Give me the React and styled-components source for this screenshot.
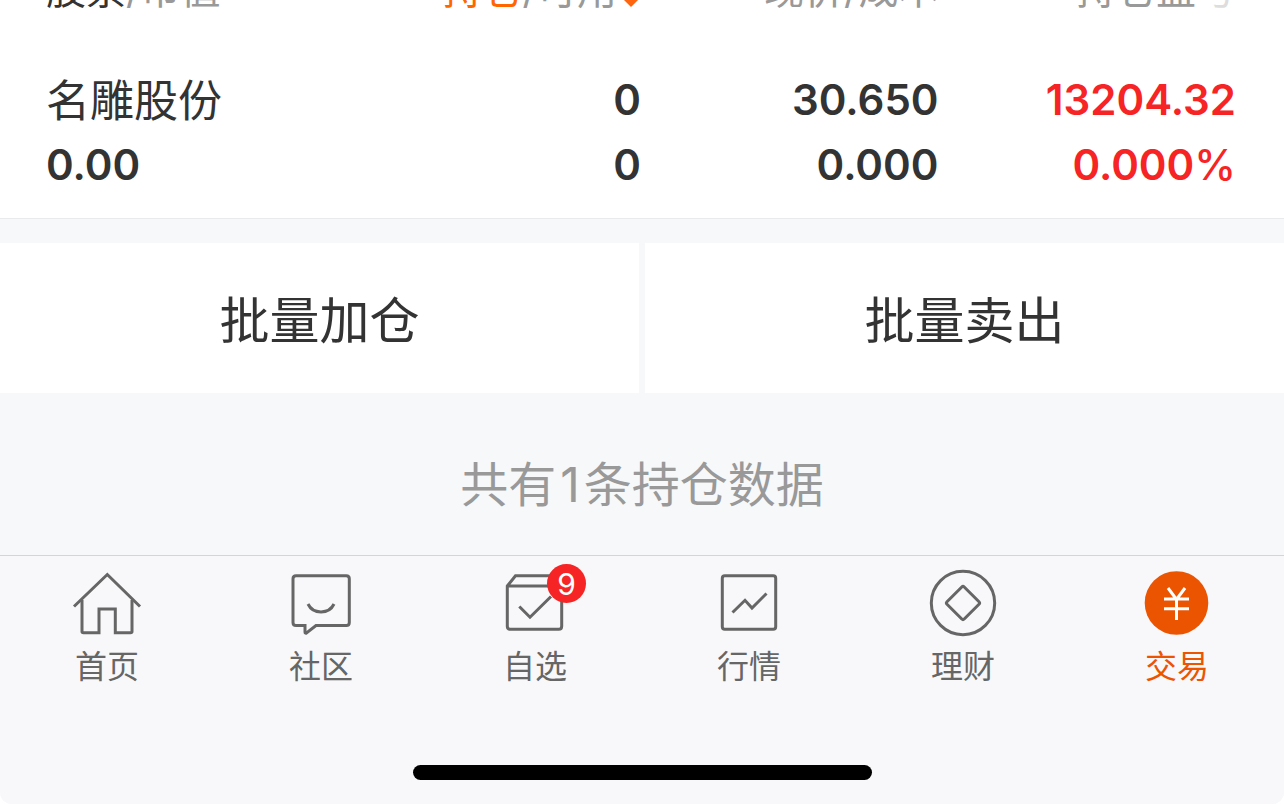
import React from 'react';
import styled, { createGlobalStyle } from 'styled-components';

const holdings = [
  {
    name: '名雕股份',
    value: '0.00',
    position: '0',
    available: '0',
    price: '30.650',
    cost: '0.000',
    profit: '13204.32',
    ratio: '0.000',
  },
];

const HomeIcon = () => (
  <Icon viewBox="0 0 70 70">
    <path d="M2 38.5 35.3 6.5 68 38.5" />
    <path d="M10 32V63.5Q10 64.7 11.5 64.7H27V41H43.3V64.7H58.5Q60 64.7 60 63.5V32" />
  </Icon>
);

const CommunityIcon = () => (
  <Icon viewBox="0 0 70 70">
    <path d="M10 7.7H60.3Q63.3 7.7 63.3 10.7V54.6Q63.3 57.6 60.3 57.6H30L20.5 65Q19 65.6 19 64V57.6H10Q7 57.6 7 54.6V10.7Q7 7.7 10 7.7Z" />
    <path d="M22 36C27 46.5 43 46.5 48 36" />
  </Icon>
);

const WatchlistIcon = () => (
  <Icon viewBox="0 0 70 70">
    <path d="M7.3 18 15.5 7.7H53.5L61.7 18V58.3Q61.7 61.3 58.7 61.3H10.3Q7.3 61.3 7.3 58.3ZH61.7" />
    <path d="M19.3 38.5 30 49.2 51 28.5" />
  </Icon>
);

const MarketIcon = () => (
  <Icon viewBox="0 0 70 70">
    <rect x="8.3" y="7.7" width="53.4" height="53.6" rx="2.5" />
    <path d="M18.5 44.5 31 32.3 38 40 52.5 25.5" />
  </Icon>
);

const WealthIcon = () => (
  <Icon viewBox="0 0 70 70">
    <circle cx="35" cy="35" r="31.7" />
    <path d="M33.8 19 19 33.8Q17.8 35 19 36.2L33.8 51Q35 52.2 36.2 51L51 36.2Q52.2 35 51 33.8L36.2 19Q35 17.8 33.8 19Z" />
  </Icon>
);

const TradeIcon = () => (
  <Icon viewBox="0 0 70 70">
    <circle cx="34.5" cy="35" r="31.8" fill="#eb5502" stroke="none" />
    <path
      d="M26 20 34.5 31.5 43 20M22 31H47M22 40.7H47M34.5 31V52"
      stroke="#fff"
    />
  </Icon>
);

const tabs = [
  { label: '首页', icon: <HomeIcon /> },
  { label: '社区', icon: <CommunityIcon /> },
  { label: '自选', icon: <WatchlistIcon />, badge: 9 },
  { label: '行情', icon: <MarketIcon /> },
  { label: '理财', icon: <WealthIcon /> },
  { label: '交易', icon: <TradeIcon />, active: true },
];

const App = () => {
  return (
    <Screen>
      <GlobalStyle />
      <Table>
        <thead>
          <tr>
            <HeadCell>
              <HeadLabel>
                <Dark>股票</Dark>/市值
              </HeadLabel>
            </HeadCell>
            <HeadCell>
              <HeadLabel>
                <Accent>持仓</Accent>/可用
                <SortArrow viewBox="0 0 20 20">
                  <path d="M10 19 1 10H19Z" />
                </SortArrow>
              </HeadLabel>
            </HeadCell>
            <HeadCell>
              <HeadLabel>现价/成本</HeadLabel>
            </HeadCell>
            <HeadCell>
              <HeadLabel>
                持仓盈<Faded>亏</Faded>
              </HeadLabel>
            </HeadCell>
          </tr>
        </thead>
        <tbody>
          {holdings.map((item) => (
            <tr key={item.name}>
              <Cell>
                <StockName>{item.name}</StockName>
                <Figure>{item.value}</Figure>
              </Cell>
              <Cell>
                <Figure>{item.position}</Figure>
                <Figure>{item.available}</Figure>
              </Cell>
              <Cell>
                <Figure>{item.price}</Figure>
                <Figure>{item.cost}</Figure>
              </Cell>
              <Cell>
                <Figure $up>{item.profit}</Figure>
                <Figure $up>
                  {item.ratio}
                  <Percent>%</Percent>
                </Figure>
              </Cell>
            </tr>
          ))}
        </tbody>
      </Table>
      <Actions>
        <ActionButton type="button">批量加仓</ActionButton>
        <ActionButton type="button">批量卖出</ActionButton>
      </Actions>
      <Summary>
        共有<Count>{holdings.length}</Count>条持仓数据
      </Summary>
      <BottomBar>
        <Tabs>
          {tabs.map((tab) => (
            <Tab key={tab.label} href="#" $active={tab.active}>
              <IconBox>
                {tab.icon}
                {tab.badge && <Badge>{tab.badge}</Badge>}
              </IconBox>
              <TabLabel>{tab.label}</TabLabel>
            </Tab>
          ))}
        </Tabs>
        <HomeIndicator />
      </BottomBar>
    </Screen>
  );
};

const GlobalStyle = createGlobalStyle`
  * {
    box-sizing: border-box;
  }

  body {
    margin: 0;
    background: #fff;
    font-family: Inter, 'Noto Sans CJK SC', sans-serif;
    color: #333;
  }
`;

const Screen = styled.div`
  display: flex;
  flex-direction: column;
  min-height: 100vh;
  background: #f7f8fa;
  border-radius: 0 0 12px 12px;
  overflow: hidden;
`;

const Table = styled.table`
  width: 100%;
  table-layout: fixed;
  border-spacing: 0;
  padding: 0 48px 21px 46px;
  background: #fff;
  border-bottom: 1px solid #e9eaec;
`;

const HeadCell = styled.th`
  padding: 0 0 51px;
  font-weight: 400;
`;

/* scrolled halfway under the top edge, so only the foot of the text shows */
const HeadLabel = styled.div`
  display: flex;
  align-items: flex-end;
  justify-content: flex-end;
  height: 16px;
  font-size: 40px;
  line-height: 52px;
  color: #999;
  white-space: nowrap;

  ${HeadCell}:first-child & {
    justify-content: flex-start;
  }
`;

const Dark = styled.span`
  color: #333;
`;

const Accent = styled.span`
  color: #f60;
`;

const Faded = styled.span`
  color: #ddd;
`;

const SortArrow = styled.svg`
  width: 20px;
  height: 20px;
  margin: 0 0 8px 4px;
  fill: #ff640f;
`;

const Cell = styled.td`
  padding: 0;
  text-align: right;

  &:first-child {
    text-align: left;
  }
`;

const StockName = styled.div`
  padding-top: 4px;
  font-size: 44px;
  line-height: 61px;
`;

const Figure = styled.div`
  font-size: 42px;
  font-weight: 600;
  line-height: 65px;
  color: ${({ $up }) => ($up ? '#f62424' : '#333')};
`;

const Percent = styled.span`
  font-weight: 500;
`;

const Actions = styled.div`
  display: grid;
  grid-template-columns: 1fr 1fr;
  gap: 6px;
  margin-top: 24px;
`;

const ActionButton = styled.button`
  height: 150px;
  padding: 0 0 2px;
  border: none;
  background: #fff;
  font-family: inherit;
  font-size: 50px;
  color: #333;
  cursor: pointer;
`;

const Summary = styled.p`
  margin: 0;
  padding: 56px 0 34px;
  font-size: 48px;
  line-height: 72px;
  color: #999;
  text-align: center;
`;

const Count = styled.span`
  padding: 0 4px;
`;

const BottomBar = styled.nav`
  display: flex;
  flex-direction: column;
  flex: 1;
  align-items: center;
  justify-content: space-between;
  padding: 12px 0 24px;
  border-top: 1px solid #d3d5d8;
  background: #f8f8fb;
`;

const Tabs = styled.div`
  display: grid;
  grid-template-columns: repeat(6, 1fr);
  width: 100%;
`;

const Tab = styled.a`
  display: flex;
  flex-direction: column;
  align-items: center;
  color: ${({ $active }) => ($active ? '#eb5502' : '#666')};
  text-decoration: none;
`;

const IconBox = styled.span`
  position: relative;
  display: flex;
`;

const Icon = styled.svg`
  width: 70px;
  height: 70px;
  fill: none;
  stroke: #666;
  stroke-width: 3;
`;

const Badge = styled.span`
  position: absolute;
  top: -4px;
  right: -16px;
  width: 39px;
  height: 39px;
  border-radius: 50%;
  background: #f62424;
  font-size: 30px;
  line-height: 40px;
  color: #fff;
  text-align: center;
`;

const TabLabel = styled.span`
  margin-top: 5px;
  font-size: 32px;
  line-height: 48px;
`;

const HomeIndicator = styled.div`
  width: 459px;
  max-width: 60%;
  height: 15px;
  border-radius: 8px;
  background: #000;
`;

export default App;
